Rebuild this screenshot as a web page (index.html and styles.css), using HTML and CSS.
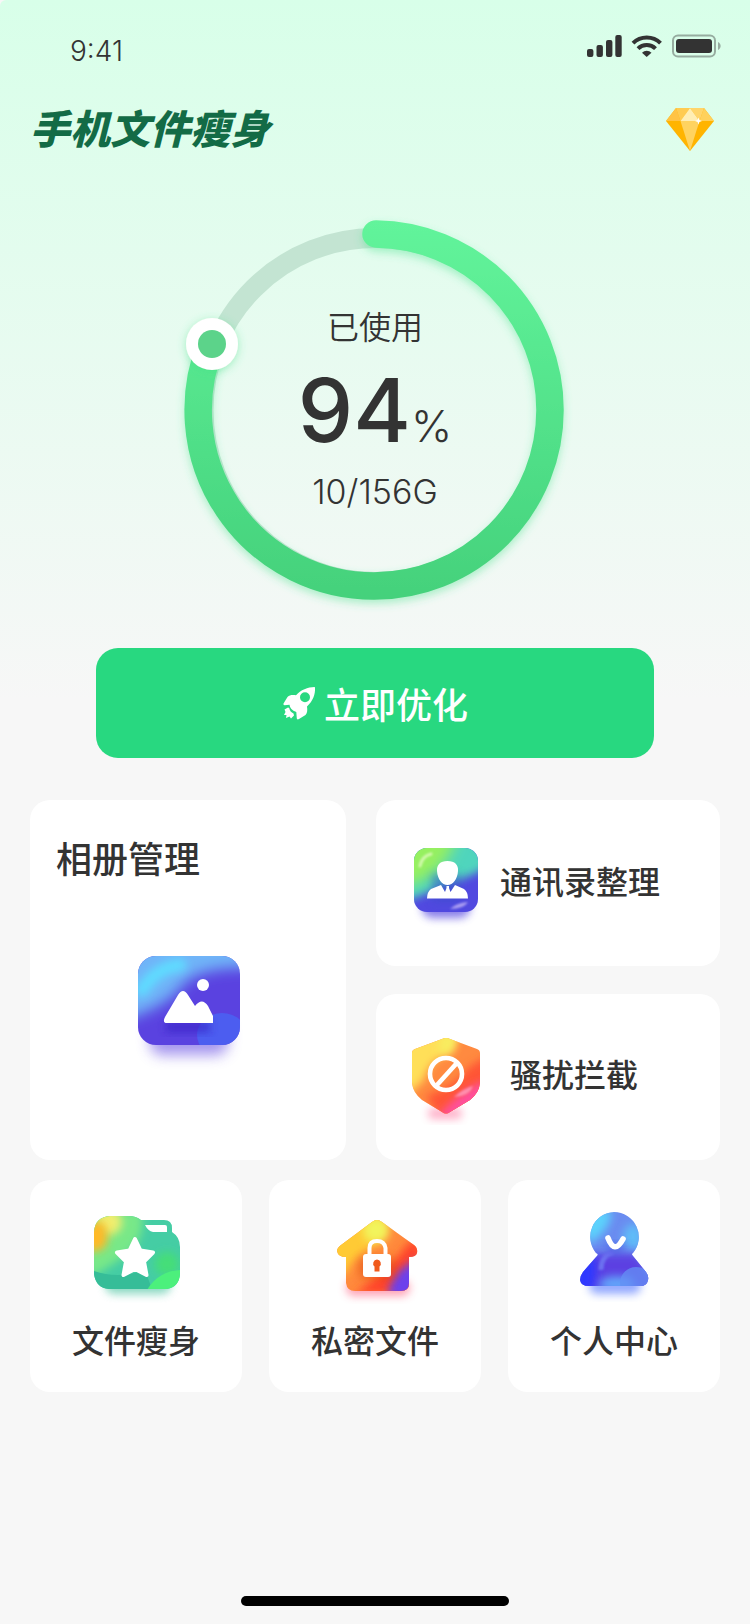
FILE: index.html
```html
<!DOCTYPE html>
<html lang="zh-CN">
<head>
<meta charset="utf-8">
<meta name="viewport" content="width=device-width, initial-scale=1">
<title>手机文件瘦身</title>
<link rel="stylesheet" href="styles.css">
</head>
<body>
<div class="screen">
  <div class="status">
    <span class="status-time">9:41</span>
    <svg class="status-icons" width="134" height="26" viewBox="587 33 134 26" aria-hidden="true">
      <g fill="#333">
        <rect x="587" y="49" width="6.400" height="8" rx="2"/>
        <rect x="596.500" y="45" width="6.400" height="12" rx="2"/>
        <rect x="606" y="40" width="6.400" height="17" rx="2"/>
        <rect x="615.300" y="35" width="6.400" height="22" rx="2"/>
      </g>
      <g fill="none" stroke="#333" stroke-width="4">
        <path d="M633 43.200a19.500 19.500 0 0 1 27.500 0"/>
        <path d="M638 48.700a12.400 12.400 0 0 1 17.500 0"/>
      </g>
      <path d="M642 52.700a6.800 6.800 0 0 1 9.500 0L646.700 57Z" fill="#333"/>
      <rect x="673" y="35.500" width="42" height="21" rx="5" fill="none" stroke="#333" stroke-opacity=".4" stroke-width="2"/>
      <rect x="676" y="39" width="36" height="14" rx="3" fill="#333"/>
      <path d="M718 42c3.500 1.500 3.500 6.500 0 8Z" fill="#333" fill-opacity=".4"/>
    </svg>
  </div>

  <header class="header">
    <h1 class="title">手机文件瘦身</h1>
    <button class="vip" type="button" aria-label="会员">
      <svg width="48" height="44" viewBox="0 0 48 44" aria-hidden="true">
        <path d="M10 0H38L48 13 24 43 0 13Z" fill="#ffb400"/>
        <path d="M10 0 0 13H14.500Z" fill="#ffc345"/>
        <path d="M38 0 48 13H33.500Z" fill="#ffd15c"/>
        <path d="M10 0H24L14.500 13Z" fill="#ffcb52"/>
        <path d="M24 0H38L33.500 13Z" fill="#ffd56b"/>
        <path d="M24 0 33.500 13H14.500Z" fill="#ffeeb5"/>
        <path d="M14.500 13H33.500L24 43Z" fill="#ffd360"/>
        <path d="M32.500 9.500 33.400 12.100 36 13 33.400 13.900 32.500 16.500 31.600 13.900 29 13 31.600 12.100Z" fill="#fff"/>
      </svg>
    </button>
  </header>

  <main class="main">
    <section class="usage">
      <svg class="usage-ring" width="400" height="400" viewBox="0 0 400 400" aria-hidden="true">
        <defs>
          <linearGradient id="ring" gradientUnits="userSpaceOnUse" x1="200" y1="10" x2="190" y2="390">
            <stop offset="0" stop-color="#62f49b"/>
            <stop offset="1" stop-color="#44d17b"/>
          </linearGradient>
          <filter id="ringShadow" x="-10%" y="-10%" width="120%" height="120%">
            <feDropShadow dx="0" dy="4" stdDeviation="4" flood-color="#3fe084" flood-opacity=".4"/>
          </filter>
          <filter id="knobShadow" x="-40%" y="-40%" width="180%" height="180%">
            <feDropShadow dx="0" dy="2" stdDeviation="5" flood-color="#3fe084" flood-opacity=".45"/>
          </filter>
        </defs>
        <circle cx="200.500" cy="200" r="172" fill="none" stroke="#c3e4d2" stroke-width="20"/>
        <path d="M201 24A176 176 0 0 1 375 200 176 176 0 0 1 199 376 176 176 0 0 1 36 134" fill="none" stroke="url(#ring)" stroke-width="27.500" stroke-linecap="round" filter="url(#ringShadow)"/>
        <circle cx="37" cy="134" r="26" fill="#fff" filter="url(#knobShadow)"/>
        <circle cx="37" cy="134" r="14" fill="#5cd38a"/>
      </svg>
      <div class="usage-text">
        <p class="usage-label">已使用</p>
        <p class="usage-value">94<span class="usage-unit">%</span></p>
        <p class="usage-total">10/156G</p>
      </div>
    </section>

    <button class="optimize" type="button">
      <svg width="34" height="34" viewBox="0 0 34 34" aria-hidden="true">
        <path fill="#fff" fill-rule="evenodd" d="M32.500 1C26 1 18.500 4 14 9.300 10.500 8.700 7.500 9 5.500 11L1.500 17.500Q1 19 2.500 19.200L7.500 18.800Q8 24 14.300 26L14.800 32.500Q15.500 34 17 33L23.500 29C25.500 27 25.500 24 25 20.500 31 15 33.500 8 33 1.500ZM23 6.200a5 5 0 1 1 0 10 5 5 0 0 1 0-10Z"/>
        <path fill="#fff" d="M6 21.500 2.500 23.500 3.500 26 2 29 4.500 29 4 32 7.500 30.500 9 32.500 12 29.500 11.500 27.500Q8 26 7.200 22Z"/>
      </svg>
      <span>立即优化</span>
    </button>

    <nav class="cards">
      <div class="cards-top">
        <a class="card card-album" href="#album">
          <span class="card-heading">相册管理</span>
          <svg class="card-icon" width="102" height="90" viewBox="0 0 102 90" aria-hidden="true">
            <defs>
              <clipPath id="albumClip"><rect width="102" height="89" rx="18"/></clipPath>
              <filter id="blur4" x="-50%" y="-50%" width="200%" height="200%"><feGaussianBlur stdDeviation="4"/></filter>
              <filter id="blur7" x="-50%" y="-50%" width="200%" height="200%"><feGaussianBlur stdDeviation="7"/></filter>
            </defs>
            <rect x="12" y="62" width="78" height="37" rx="12" fill="#5a3ee0" opacity=".55" filter="url(#blur7)"/>
            <g clip-path="url(#albumClip)">
              <rect width="102" height="89" fill="#5a42e0"/>
              <path d="M-20-20H120V12Q60 10 44 30 28 52-20 66Z" fill="#70b4f8" filter="url(#blur7)"/>
              <path d="M4 34Q18 12 42 9" fill="none" stroke="#5fdcff" stroke-width="13" stroke-linecap="round" filter="url(#blur4)"/>
              <ellipse cx="84" cy="79" rx="25" ry="22" fill="#4a62f2" opacity=".85"/>
              <path d="M28 66H72V76H28Z" fill="#3420c4" opacity=".7" filter="url(#blur4)"/>
            </g>
            <path d="M27 61 40 39Q45 31 50 39L57 50Q64 41 70 50L75 60V67H29Q24 67 27 61Z" fill="#fff"/>
            <circle cx="65" cy="29" r="6" fill="#fff"/>
          </svg>
        </a>
        <div class="cards-side">
          <a class="card card-row" href="#contacts">
            <svg class="card-icon" width="64" height="70" viewBox="0 0 64 70" aria-hidden="true">
              <defs><clipPath id="contactClip"><rect width="64" height="64" rx="13"/></clipPath>
              <filter id="blur1" x="-50%" y="-50%" width="200%" height="200%"><feGaussianBlur stdDeviation="1"/></filter></defs>
              <rect x="8" y="46" width="48" height="24" rx="10" fill="#5647e0" opacity=".7" filter="url(#blur4)"/>
              <g clip-path="url(#contactClip)">
                <rect width="64" height="64" fill="#5149e0"/>
                <path d="M-20-20H84V10L64 24Q50 30 36 36T0 50L-20 56Z" fill="#50d5bd" filter="url(#blur4)"/>
                <path d="M-24-24H48Q38 8 24 22T-24 42Z" fill="#96f060" filter="url(#blur7)"/>
                <path d="M60-10H80V20Z" fill="#4aa0e0" filter="url(#blur4)"/>
                <path d="M18 26H46V54H18Z" fill="#3850c8" opacity=".5" filter="url(#blur4)"/>
                <path d="M6 18Q8 8 17 6" fill="none" stroke="#d3f9ae" stroke-width="3" stroke-linecap="round" filter="url(#blur1)"/>
                <path d="M36 61Q50 61 54 54 42 55 36 61Z" fill="#a99cf2" filter="url(#blur1)"/>
              </g>
              <path d="M33.500 13C41 13 44.500 17 44 23 43.500 31 39 37 33.500 37S23.500 31 23 23C22.500 17 26 13 33.500 13ZM27 37 31 44 32.500 40V38H35V40L36.500 44 41 37 50 41Q54 44 54 50.500H13Q13 44 17 41Z" fill="#fff"/>
            </svg>
            <span class="card-label">通讯录整理</span>
          </a>
          <a class="card card-row card-block" href="#block">
            <svg class="card-icon" width="68" height="76" viewBox="0 0 68 76" aria-hidden="true">
              <defs><clipPath id="shieldClip"><path d="M34 0Q36 0 38 1L65 11Q68 12 68 15V45Q67 55 58 62L38 74Q34 77 30 74L10 62Q1 55 0 45V15Q0 12 3 11L30 1Q32 0 34 0Z"/></clipPath></defs>
              <rect x="16" y="70" width="34" height="11" rx="5" fill="#ff4f86" opacity=".45" filter="url(#blur4)"/>
              <g clip-path="url(#shieldClip)">
                <rect width="68" height="78" fill="#ff8a40"/>
                <path d="M46-6 38 14Q16 24 12 42L-10 62V-10H40Z" fill="#ffdf58" filter="url(#blur4)"/>
                <path d="M30-4H44Q46 8 38 16H26Z" fill="#f8ee60" filter="url(#blur4)"/>
                <path d="M78 16 56 30Q44 48 14 58L30 84H80Z" fill="#ff5434" filter="url(#blur4)"/>
                <path d="M24 80Q36 66 52 54T76 44V84Z" fill="#ff4f9c" filter="url(#blur4)"/>
                <path d="M42 59Q58 58 61 48 52 50 42 59Z" fill="#ff8fae" filter="url(#blur1)"/>
              </g>
              <circle cx="34" cy="36" r="16" fill="none" stroke="#fff" stroke-width="4.600"/>
              <path d="M44 26 25 47" stroke="#fff" stroke-width="4.600"/>
            </svg>
            <span class="card-label">骚扰拦截</span>
          </a>
        </div>
      </div>

      <div class="cards-bottom">
        <a class="card card-tile" href="#files">
          <svg class="card-icon" width="90" height="80" viewBox="0 0 90 80" aria-hidden="true">
            <defs><clipPath id="folderClip"><path d="M19 6H38Q45 6 50 10H73Q81 10 81 18V22Q89 27 89 37V64Q88 77 76 79H18Q5 78 3 64V22Q4 7 19 6Z"/></clipPath></defs>
            <rect x="14" y="66" width="66" height="18" rx="9" fill="#3cc09a" opacity=".6" filter="url(#blur4)"/>
            <g clip-path="url(#folderClip)">
              <rect width="90" height="80" fill="#45cda4"/>
              <path d="M-4 0H50Q58 30 28 50T-4 66Z" fill="#78e888" filter="url(#blur4)"/>
              <circle cx="18" cy="12" r="13" fill="#f0ee70" filter="url(#blur4)"/>
              <path d="M-10 12H12Q18 22 16 32T-2 42Z" fill="#ffb928" filter="url(#blur4)"/>
              <path d="M0 60Q26 70 54 60L62 82H0Z" fill="#36bd98"/>
              <circle cx="76" cy="54" r="12" fill="#45de78" filter="url(#blur4)"/>
              <path d="M56 80Q68 60 92 60V82Z" fill="#4cf07c"/>
            </g>
            <path d="M54 15H74Q76 15 76 17V22H62Q57 21 54 15Z" fill="#fff"/>
            <path d="M44 29 49.500 40.500 62 42.500 53 51.500 55.500 65 44 59 32.500 65 35 51.500 26 42.500 38.500 40.500Z" fill="#fff" stroke="#fff" stroke-width="4" stroke-linejoin="round"/>
          </svg>
          <span class="card-label">文件瘦身</span>
        </a>
        <a class="card card-tile" href="#private">
          <svg class="card-icon" width="90" height="80" viewBox="0 0 90 80" aria-hidden="true">
            <defs><clipPath id="houseClip"><path d="M42 12Q47 8 52 12L84 35Q88 38 87 43 86 47 79 47V73Q79 81 71 81H25Q17 81 16 73V47Q8 47 7 41 7 38 11 35Z"/></clipPath></defs>
            <rect x="16" y="70" width="64" height="16" rx="8" fill="#ff4a6e" opacity=".5" filter="url(#blur4)"/>
            <g clip-path="url(#houseClip)">
              <rect width="94" height="84" fill="#ff8a3c"/>
              <path d="M0 20 50-4Q64 22 40 38T18 64L0 60Z" fill="#ffca34" filter="url(#blur4)"/>
              <circle cx="46" cy="20" r="13" fill="#f2f45c" filter="url(#blur4)"/>
              <path d="M90 24 74 38Q64 56 24 84H92Z" fill="#ff452c" filter="url(#blur4)"/>
              <path d="M92 48Q60 58 58 88H92Z" fill="#6c40ec" filter="url(#blur4)"/>
              <rect x="30" y="48" width="34" height="20" fill="#d84410" opacity=".55" filter="url(#blur4)"/>
            </g>
            <rect x="33" y="44" width="28" height="23" rx="3" fill="#fff"/>
            <path d="M39.500 46V38Q39.500 31 47 31T55.500 38V46" fill="none" stroke="#fff" stroke-width="4"/>
            <path d="M47 49.500A4 4 0 0 1 49.500 56.500V61.500H44.500V56.500A4 4 0 0 1 47 49.500Z" fill="#f05a1c"/>
          </svg>
          <span class="card-label">私密文件</span>
        </a>
        <a class="card card-tile" href="#me">
          <svg class="card-icon" width="90" height="80" viewBox="0 0 90 80" aria-hidden="true">
            <defs><clipPath id="personClip"><path d="M45 2A25 25 0 0 1 64 43Q62 44 64 46L77 62Q80 66 79 70 78 76 71 76H20Q12 76 11 70 11 66 14 62L28 46Q30 44 27 43A25 25 0 0 1 45 2Z"/></clipPath></defs>
            <rect x="20" y="68" width="52" height="16" rx="8" fill="#5a7cff" opacity=".65" filter="url(#blur4)"/>
            <g clip-path="url(#personClip)">
              <rect width="90" height="80" fill="#6a8cf0"/>
              <path d="M10 0H42Q44 18 20 34Z" fill="#5cd2fc" filter="url(#blur4)"/>
              <ellipse cx="64" cy="27" rx="10" ry="13" fill="#60bcf8" filter="url(#blur4)"/>
              <path d="M20 44H68L90 80H10Z" fill="#5b40e2" filter="url(#blur4)"/>
              <path d="M5 50 26 46Q30 66 22 84H4Z" fill="#2d38ff" filter="url(#blur4)"/>
              <ellipse cx="48" cy="74" rx="18" ry="8" fill="#62a4fa" filter="url(#blur4)"/>
              <circle cx="67" cy="73" r="16" fill="#6490f4" opacity=".75"/>
              <path d="M32 60Q32 46 44 42" fill="none" stroke="#6c70f0" stroke-width="5" filter="url(#blur1)"/>
              <path d="M34 34H58L52 43H40Z" fill="#3c50e0" opacity=".5" filter="url(#blur4)"/>
            </g>
            <path d="M39 28Q45.500 45 54 29" fill="none" stroke="#fff" stroke-width="5.600" stroke-linecap="round"/>
          </svg>
          <span class="card-label">个人中心</span>
        </a>
      </div>
    </nav>
  </main>

  <div class="home-bar"></div>
</div>
</body>
</html>
```
FILE: styles.css
```css
* {
  box-sizing: border-box;
}

body {
  margin: 0;
  background: #f7f7f7;
  color: #333;
  font-family: Inter, "Noto Sans CJK SC", sans-serif;
}

h1,
p {
  margin: 0;
}

button {
  border: 0;
  font: inherit;
  cursor: pointer;
}

a {
  color: inherit;
  text-decoration: none;
}

svg {
  display: block;
  overflow: visible;
}

.screen {
  display: flex;
  flex-direction: column;
  min-height: 100vh;
  border-top-left-radius: 6px;
  background: linear-gradient(#d8ffe9 0, #f7f7f7 700px);
}

.status {
  display: flex;
  align-items: flex-start;
  justify-content: space-between;
  padding: 33px 29px 0 70px;
}

.status-time {
  font-size: 28px;
  font-weight: 300;
  line-height: 36px;
}

.header {
  display: flex;
  align-items: center;
  justify-content: space-between;
  padding: 32px 36px 0 30px;
}

.title {
  color: #136b46;
  font-size: 40px;
  font-style: italic;
  font-weight: 900;
  line-height: 58px;
}

.vip {
  padding: 0;
  background: none;
}

.main {
  display: flex;
  flex-direction: column;
  padding: 51px 30px 0;
}

.usage {
  display: grid;
  place-items: center;
}

.usage-ring,
.usage-text {
  grid-area: 1 / 1;
}

.usage-text {
  display: flex;
  flex-direction: column;
  gap: 18px;
  text-align: center;
}

.usage-label,
.usage-total {
  line-height: 40px;
}

.usage-label {
  font-size: 32px;
  font-weight: 350;
}

.usage-total {
  font-size: 34px;
  font-weight: 300;
}

.usage-value {
  font-family: Inter, sans-serif;
  font-size: 88px;
  font-weight: 450;
  line-height: 88px;
}

.usage-unit {
  font-size: 44px;
  font-weight: 300;
  line-height: 44px;
}

.optimize {
  display: flex;
  align-items: center;
  justify-content: center;
  gap: 8px;
  height: 110px;
  margin: 38px 66px 0;
  padding: 0;
  border-radius: 22px;
  background: #28d880;
  color: #fff;
  font-size: 36px;
  font-weight: 500;
}

.cards {
  display: flex;
  flex-direction: column;
  gap: 20px;
  margin-top: 42px;
}

.cards-top {
  display: grid;
  grid-template-columns: 316fr 344fr;
  gap: 30px;
}

.cards-side {
  display: grid;
  gap: 28px;
}

.cards-bottom {
  display: grid;
  grid-template-columns: repeat(3, 1fr);
  gap: 27px;
}

.card {
  display: flex;
  border-radius: 20px;
  background: #fff;
  font-weight: 500;
}

.card-album {
  flex-direction: column;
  align-items: center;
  gap: 70px;
  padding: 34px 24px 32px 26px;
}

.card-heading {
  align-self: flex-start;
  font-size: 36px;
  line-height: 52px;
}

.card-label {
  font-size: 32px;
  line-height: 48px;
}

.card-row {
  align-items: center;
  gap: 22px;
  height: 166px;
  padding: 0 38px;
}

.card-block {
  gap: 30px;
  padding: 0 36px 2px;
}

.card-tile {
  flex-direction: column;
  align-items: center;
  gap: 28px;
  padding: 30px 0 26px;
}

.home-bar {
  align-self: center;
  width: 268px;
  height: 10px;
  margin-top: auto;
  margin-bottom: 18px;
  border-radius: 5px;
  background: #000;
}
```
